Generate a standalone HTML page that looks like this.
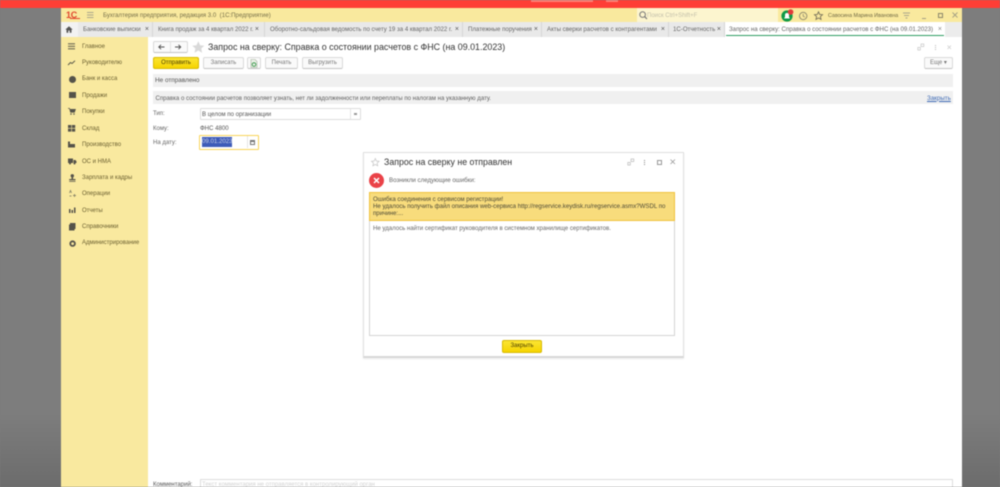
<!DOCTYPE html>
<html lang="ru"><head><meta charset="utf-8"><title>Запрос на сверку</title>
<style>
html,body{margin:0;padding:0;width:1000px;height:487px;overflow:hidden;background:#7b7b7b}
body{position:relative;font-family:"Liberation Sans","DejaVu Sans",sans-serif;color:#444}
#w{position:absolute;left:0;top:0;width:1000px;height:487px;overflow:hidden;filter:blur(.4px);background:linear-gradient(#7d7d7d 0,#7d7d7d 85%,#6c6c6c 100%)}
#red{position:absolute;left:0;top:0;width:1000px;height:7.5px;background:#fe3e36}
.b{position:absolute;box-sizing:border-box}
.t{position:absolute;white-space:nowrap;line-height:10px}
.btn{position:absolute;box-sizing:border-box;background:#fafafa;border:1px solid #dadada;border-bottom-color:#c4c4c4;border-radius:2px;text-align:center;color:#777;font-size:6px;line-height:11px;white-space:nowrap}
.y{background:linear-gradient(#fbe533,#f6d400);border:1px solid #d8ba00;color:#4a3d00}
.tab{position:absolute;top:22px;height:15px;background:#e9e9e9;border-right:1px solid #d6d6d6;box-sizing:border-box;font-size:6.1px;line-height:15.5px;color:#666;padding-left:5px;white-space:nowrap;overflow:hidden}
.tab i{position:absolute;right:3px;top:0;font-style:normal;font-size:7px;color:#555;background:inherit}
.nav{position:absolute;left:82px;font-size:6px;line-height:8px;color:#6a5f30;white-space:nowrap}
svg{position:absolute;overflow:visible}
</style></head><body>
<div id="w">
<div id="red"></div>
<div class="b" style="left:531px;top:0;width:62px;height:2px;background:#fe7f75"></div>
<div class="b" style="left:606px;top:0;width:12px;height:2px;background:#fe7f75"></div>

<!-- window -->
<div class="b" style="left:61px;top:7.5px;width:901px;height:479.5px;background:#fff"></div>
<!-- titlebar -->
<div class="b" style="left:61px;top:7.5px;width:901px;height:15px;background:#f9e99e"></div>
<div class="t" style="left:66px;top:10px;font-size:9px;font-weight:bold;color:#e0462e;letter-spacing:-.3px">1С</div>
<div class="b" style="left:70px;top:18px;width:10px;height:1px;background:#e0462e"></div>
<svg style="left:87px;top:12px" width="7" height="7"><path d="M0 .5h6.500M0 3h6.500M0 5.500h6.500" stroke="#aaa68c" stroke-width="1"/></svg>
<div class="t" style="left:103px;top:10.5px;font-size:6.1px;color:#77704a">Бухгалтерия предприятия, редакция 3.0&nbsp; (1С:Предприятие)</div>
<div class="b" style="left:637px;top:8px;width:141px;height:14px;background:#fcf5cf"></div>
<svg style="left:639px;top:11px" width="9" height="9"><circle cx="3.6" cy="3.6" r="2.8" fill="none" stroke="#777" stroke-width="1"/><path d="M5.6 5.6L8 8" stroke="#777" stroke-width="1.2"/></svg>
<div class="t" style="left:647px;top:10.5px;font-size:6px;color:#c4c0ab">Поиск Ctrl+Shift+F</div>
<svg style="left:781px;top:9px" width="13" height="13"><circle cx="6" cy="7" r="5.6" fill="#0f9a47"/><path d="M3 9.5h6L8 8V6a2 2 0 0 0-4 0v2z" fill="#fff"/><circle cx="9.6" cy="3" r="2.8" fill="#e23b3b"/></svg>
<svg style="left:798px;top:10.5px" width="11" height="11"><circle cx="5.2" cy="5" r="3.7" fill="none" stroke="#8c866c" stroke-width=".9"/><path d="M5.2 3v2.2l1.6 1" fill="none" stroke="#8c866c" stroke-width=".8"/></svg>
<svg style="left:814px;top:10.5px" width="11" height="11"><path d="M4.500 .8l1.200 2.600 2.800.3-2.100 1.900.6 2.800-2.500-1.400-2.500 1.400.6-2.800-2.100-1.900 2.800-.3z" fill="none" stroke="#77715a" stroke-width=".9"/></svg>
<div class="t" style="left:828px;top:10.5px;font-size:5.3px;color:#6f6843">Савосина Марина Ивановна</div>
<svg style="left:903px;top:12px" width="8" height="8"><path d="M0 1h7M1 3.500h5M2.500 6h2" stroke="#aaa68c" stroke-width="1"/></svg>
<div class="b" style="left:922px;top:18px;width:4px;height:1px;background:#a5a084"></div>
<div class="b" style="left:938px;top:13px;width:5px;height:5px;border:1px solid #8c876a"></div>
<svg style="left:952px;top:12px" width="7" height="7"><path d="M.5 .5l5 5M5.500 .5l-5 5" stroke="#a5a084" stroke-width=".9"/></svg>

<!-- tabs -->
<div class="b" style="left:61px;top:22px;width:901px;height:15px;background:#ececec"></div>
<div class="b" style="left:61px;top:22px;width:17px;height:15px;background:#f2f2f2"></div>
<svg style="left:65px;top:26px" width="8" height="7"><path d="M4 .3L.3 3.600h1.200V6.700h1.800V4.500h1.400v2.200h1.800V3.600h1.200z" fill="#555"/></svg>
<div class="tab" style="left:78px;width:75px">Банковские выписки<i>×</i></div>
<div class="tab" style="left:153px;width:112px">Книга продаж за 4 квартал 2022 г.<i style="right:5px;background:none">×</i></div>
<div class="tab" style="left:265px;width:198px">Оборотно-сальдовая ведомость по счету 19 за 4 квартал 2022 г.<i>×</i></div>
<div class="tab" style="left:463px;width:79px">Платежные поручения<i>×</i></div>
<div class="tab" style="left:542px;width:127px">Акты сверки расчетов с контрагентами<i>×</i></div>
<div class="tab" style="left:669px;width:56px;padding-left:4px">1С-Отчетность<i>×</i></div>
<div class="tab" style="left:725px;width:220px;background:#fff;border-right:0;padding-left:4px">Запрос на сверку: Справка о состоянии расчетов с ФНС (на 09.01.2023)<i style="color:#888">×</i></div>
<div class="b" style="left:726px;top:35px;width:218px;height:1px;background:#2e9d63"></div>

<!-- sidebar -->
<div class="b" style="left:61px;top:37px;width:87px;height:450px;background:#f9e99f"></div>
<svg style="left:68px;top:43px" width="8" height="7"><path d="M0 .8h7M0 3.300h7M0 5.800h7" stroke="#6e6b55" stroke-width="1.100"/></svg>
<svg style="left:68px;top:60px" width="8" height="6"><path d="M0 5l2.500-2.500 1.500 1L7 .8" fill="none" stroke="#5d5b4b" stroke-width="1"/></svg>
<div class="b" style="left:68.500px;top:75.500px;width:7px;height:7px;border-radius:50%;background:#55534a"></div>
<div class="b" style="left:69px;top:92px;width:7px;height:6px;background:#55534a"></div>
<svg style="left:68px;top:108px" width="8" height="7"><path d="M0 .3h1.500l1 4h4l1-3H2" fill="#55534a" stroke="#55534a" stroke-width=".6"/><circle cx="3" cy="6" r=".8" fill="#55534a"/><circle cx="6" cy="6" r=".8" fill="#55534a"/></svg>
<svg style="left:68px;top:124.500px" width="8" height="7"><path d="M0 0h3.300v3H0zM3.900 0h3.300v3H3.900zM0 3.600h3.300v3H0zM3.900 3.600h3.300v3H3.900z" fill="#55534a"/></svg>
<svg style="left:68px;top:141px" width="8" height="7"><path d="M0 6.500V.5h2v2.500l5 0v3.500z" fill="#55534a"/></svg>
<svg style="left:68px;top:158px" width="9" height="7"><path d="M0 .5h5v4.500H0zM5.500 2h2l1 1.500v1.500h-3z" fill="#55534a"/><circle cx="2" cy="5.500" r="1" fill="#55534a"/><circle cx="6.500" cy="5.500" r="1" fill="#55534a"/></svg>
<svg style="left:69px;top:173.500px" width="7" height="8"><circle cx="3.300" cy="1.800" r="1.700" fill="#55534a"/><path d="M2.500 3h1.600v2H6.500v1.200H.2V5h2.300zM.2 7h6.300v.8H.2z" fill="#55534a"/></svg>
<svg style="left:68.500px;top:190px" width="8" height="8"><path d="M.5 3l1-2.500 1 2.500M4 5.500h3M5.500 4v3M.5 6h2" fill="none" stroke="#77755f" stroke-width=".7"/></svg>
<svg style="left:69px;top:207px" width="7" height="6"><path d="M0 2h1.500v4H0zM2.500 3h1.500v3H2.500zM5 .5h1.500V6H5z" fill="#55534a"/></svg>
<svg style="left:68px;top:223px" width="8" height="8"><path d="M2 0h5.500v6H6.500v1.500H1V1.500h1z" fill="#55534a"/></svg>
<svg style="left:68.500px;top:239.500px" width="8" height="8"><circle cx="3.600" cy="3.600" r="2.300" fill="none" stroke="#55534a" stroke-width="1.800"/></svg>
<div class="nav" style="top:42.500px">Главное</div>
<div class="nav" style="top:58.500px">Руководителю</div>
<div class="nav" style="top:75px">Банк и касса</div>
<div class="nav" style="top:91.500px">Продажи</div>
<div class="nav" style="top:108px">Покупки</div>
<div class="nav" style="top:124.500px">Склад</div>
<div class="nav" style="top:141px">Производство</div>
<div class="nav" style="top:157.500px">ОС и НМА</div>
<div class="nav" style="top:173.500px">Зарплата и кадры</div>
<div class="nav" style="top:190px">Операции</div>
<div class="nav" style="top:206.500px">Отчеты</div>
<div class="nav" style="top:222.500px">Справочники</div>
<div class="nav" style="top:239px">Администрирование</div>

<!-- form header -->
<div class="btn" style="left:153px;top:41px;width:35px;height:12px"></div>
<div class="b" style="left:170px;top:42px;width:1px;height:10px;background:#e2e2e2"></div>
<svg style="left:158px;top:44px" width="7" height="6"><path d="M6.500 3H1M3 .8L.8 3 3 5.200" fill="none" stroke="#555" stroke-width="1"/></svg>
<svg style="left:175px;top:44px" width="7" height="6"><path d="M0 3h5.500M3.500 .8L5.700 3 3.500 5.200" fill="none" stroke="#555" stroke-width="1"/></svg>
<svg style="left:192px;top:41px" width="13" height="12"><path d="M6.300 .3l1.800 3.900 4.200.5-3.100 2.800.9 4.200-3.800-2.200-3.800 2.200.9-4.200L.3 4.700l4.200-.5z" fill="#d9d9d9"/></svg>
<div class="t" style="left:208px;top:42px;font-size:8.9px;color:#333">Запрос на сверку: Справка о состоянии расчетов с ФНС (на 09.01.2023)</div>
<svg style="left:917px;top:43px" width="8" height="8"><path d="M.8 4.500h2.500V7H.8zM4 1h2.800v2.500H4z" fill="none" stroke="#c8c8c8" stroke-width=".7"/></svg>
<div class="b" style="left:935px;top:45px;width:1px;height:5px;background:repeating-linear-gradient(#bbb 0 1px,#fff 1px 2px)"></div>
<svg style="left:947px;top:45px" width="5" height="5"><path d="M.5 .5l3.500 3.500M4 .5L.5 4" stroke="#ccc" stroke-width=".7"/></svg>

<div class="btn y" style="left:153px;top:57px;width:46px;height:12px;line-height:11px">Отправить</div>
<div class="btn" style="left:203px;top:57px;width:41px;height:12px">Записать</div>
<div class="btn" style="left:247px;top:57px;width:14px;height:12px"></div>
<svg style="left:250px;top:58.500px" width="8" height="9"><path d="M1 .5h4l2 2v6H1z" fill="#eef3ea" stroke="#a0ae98" stroke-width=".6"/><circle cx="4" cy="5.500" r="1.800" fill="none" stroke="#3f9a50" stroke-width="1"/></svg>
<div class="btn" style="left:265px;top:57px;width:33px;height:12px">Печать</div>
<div class="btn" style="left:302px;top:57px;width:41px;height:12px">Выгрузить</div>
<div class="btn" style="left:924px;top:57px;width:29px;height:12px">Еще ▾</div>

<div class="b" style="left:153px;top:74px;width:800px;height:13px;background:#f0f0f0"></div>
<div class="t" style="left:155px;top:76px;font-size:6.4px;color:#555">Не отправлено</div>
<div class="b" style="left:153px;top:91px;width:800px;height:13px;background:#f0f0f0"></div>
<div class="t" style="left:155.500px;top:93.500px;font-size:6.07px;color:#5f5f5f">Справка о состоянии расчетов позволяет узнать, нет ли задолженности или переплаты по налогам на указанную дату.</div>
<div class="t" style="left:927px;top:93.500px;font-size:6.2px;color:#3f6bb5;text-decoration:underline">Закрыть</div>

<div class="t" style="left:153px;top:109px;font-size:6px;color:#666">Тип:</div>
<div class="b" style="left:200px;top:108px;width:161px;height:12px;background:#fff;border:1px solid #dcdcdc;border-radius:1px"></div>
<div class="b" style="left:350px;top:109px;width:1px;height:10px;background:#e6e6e6"></div>
<div class="t" style="left:202px;top:109.500px;font-size:6.1px;color:#555">В целом по организации</div>
<div class="b" style="left:354px;top:113px;width:3px;height:2px;background:#999"></div>
<div class="t" style="left:153px;top:123.500px;font-size:6px;color:#666">Кому:</div>
<div class="t" style="left:200px;top:123.500px;font-size:6.1px;color:#555">ФНС 4800</div>
<div class="t" style="left:153px;top:137.500px;font-size:6px;color:#666">На дату:</div>
<div class="b" style="left:199px;top:134.500px;width:60px;height:15px;background:#fff;border:1.500px solid #f8d558;border-radius:1px"></div>
<div class="b" style="left:201.500px;top:137px;width:30.500px;height:9.500px;background:#3e5bb8"></div>
<div class="b" style="left:247px;top:136px;width:1px;height:12px;background:#e6e6e6"></div>
<div class="t" style="left:202px;top:137px;font-size:6.1px;color:#c7cfe8">09.01.2023</div>
<div class="b" style="left:249.500px;top:139.500px;width:5px;height:5px;border:1px solid #777;border-top-width:2px"></div>

<div class="b" style="left:200px;top:478.500px;width:753px;height:9px;background:#fff;border:1px solid #dcdcdc;border-bottom:0;border-radius:1px"></div>
<div class="t" style="left:153px;top:480px;font-size:6px;color:#555">Комментарий:</div>
<div class="t" style="left:202px;top:480px;font-size:6px;color:#d2d2d2">Текст комментария не отправляется в контролирующий орган</div>

<!-- dialog -->
<div class="b" style="left:363px;top:152px;width:321px;height:206px;background:#fff;border:1px solid #e0e0e0;border-bottom:2px solid #d8d8d8;box-shadow:0 1px 2px rgba(0,0,0,.08)"></div>
<svg style="left:370.500px;top:157.500px" width="9" height="9"><path d="M4.300 .5l1.100 2.500 2.700.3-2 1.800.6 2.700-2.400-1.400-2.400 1.400.6-2.700-2-1.800 2.700-.3z" fill="none" stroke="#c4c4c4" stroke-width=".7"/></svg>
<div class="t" style="left:384px;top:157px;font-size:8.8px;color:#333">Запрос на сверку не отправлен</div>
<svg style="left:627px;top:157.500px" width="8" height="8"><path d="M.8 4.500h2.500V7H.8zM4 1h2.800v2.500H4z" fill="none" stroke="#bbb" stroke-width=".7"/></svg>
<div class="b" style="left:644px;top:160px;width:1px;height:5px;background:repeating-linear-gradient(#888 0 1px,#fff 1px 2px)"></div>
<div class="b" style="left:657px;top:159.500px;width:5px;height:5px;border:1px solid #999"></div>
<svg style="left:670px;top:159px" width="6" height="6"><path d="M.5 .5l4.500 4.500M5 .5L.5 5" stroke="#999" stroke-width=".8"/></svg>
<div class="b" style="left:369px;top:173px;width:15px;height:15px;border-radius:50%;background:#ea4248"></div>
<svg style="left:373px;top:177px" width="7" height="7"><path d="M1 1l5 5M6 1L1 6" stroke="#fff" stroke-width="1.500"/></svg>
<div class="t" style="left:389px;top:176px;font-size:6.15px;color:#666">Возникли следующие ошибки:</div>
<div class="b" style="left:369px;top:192px;width:306px;height:144px;background:#fff;border:1px solid #d4d4d4"></div>
<div class="b" style="left:369px;top:192px;width:306px;height:29px;background:#f8dc7c;border:1px solid #f0c33c"></div>
<div class="t" style="left:373px;top:195.500px;font-size:6.1px;color:#4d4a36;line-height:7px">Ошибка соединения с сервисом регистрации!<br>Не удалось получить файл описания web-сервиса http://regservice.keydisk.ru/regservice.asmx?WSDL по<br>причине:...</div>
<div class="t" style="left:373px;top:224px;font-size:6.05px;color:#666">Не удалось найти сертификат руководителя в системном хранилище сертификатов.</div>
<div class="btn y" style="left:502px;top:340px;width:40px;height:13px;line-height:11.500px">Закрыть</div>
</div>
</body></html>
